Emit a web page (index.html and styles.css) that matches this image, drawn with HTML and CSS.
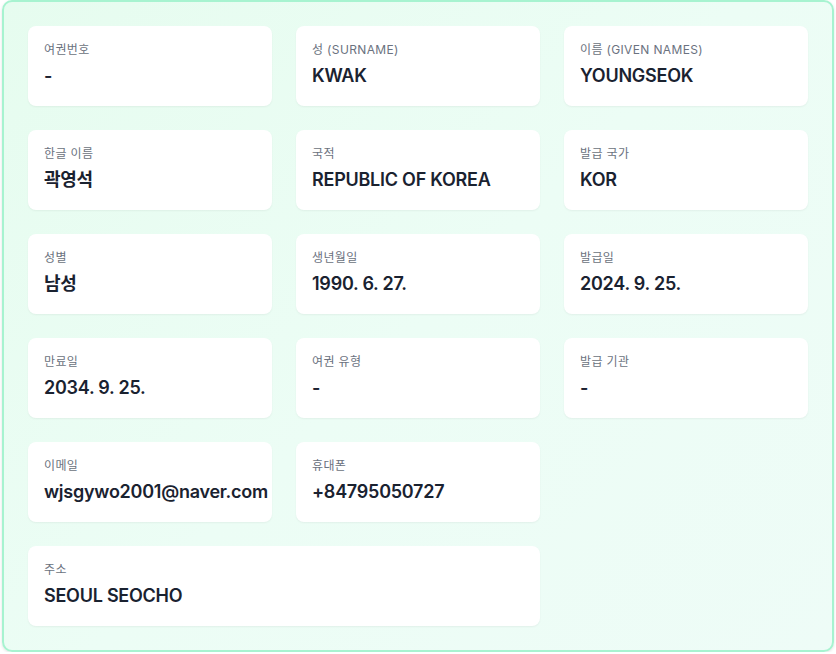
FILE: index.html
```html
<!DOCTYPE html>
<html lang="ko">
<head>
<meta charset="utf-8">
<link rel="stylesheet" href="styles.css">
</head>
<body>
<div class="panel">
  <div class="grid">
    <div class="card"><div class="label">여권번호</div><div class="value">-</div></div>
    <div class="card"><div class="label">성 (SURNAME)</div><div class="value">KWAK</div></div>
    <div class="card"><div class="label">이름 (GIVEN NAMES)</div><div class="value">YOUNGSEOK</div></div>
    <div class="card"><div class="label">한글 이름</div><div class="value">곽영석</div></div>
    <div class="card"><div class="label">국적</div><div class="value">REPUBLIC OF KOREA</div></div>
    <div class="card"><div class="label">발급 국가</div><div class="value">KOR</div></div>
    <div class="card"><div class="label">성별</div><div class="value">남성</div></div>
    <div class="card"><div class="label">생년월일</div><div class="value">1990. 6. 27.</div></div>
    <div class="card"><div class="label">발급일</div><div class="value">2024. 9. 25.</div></div>
    <div class="card"><div class="label">만료일</div><div class="value">2034. 9. 25.</div></div>
    <div class="card"><div class="label">여권 유형</div><div class="value">-</div></div>
    <div class="card"><div class="label">발급 기관</div><div class="value">-</div></div>
    <div class="card"><div class="label">이메일</div><div class="value">wjsgywo2001@naver.com</div></div>
    <div class="card"><div class="label">휴대폰</div><div class="value">+84795050727</div></div>
    <div class="card span2"><div class="label">주소</div><div class="value">SEOUL SEOCHO</div></div>
  </div>
</div>
</body>
</html>
```
FILE: styles.css
```css
html, body {
  margin: 0;
  padding: 0;
  background: #ffffff;
}
body {
  font-family: "Inter", "Noto Sans CJK KR", sans-serif;
  padding: 0 2px;
}
.panel {
  box-sizing: border-box;
  width: 832px;
  height: 652px;
  border: 2px solid #a7f3d0;
  border-radius: 10px;
  background: linear-gradient(135deg, #e6fcef 0%, #ecfdf5 50%, #eefcf7 100%);
  padding: 24px;
  box-shadow: 0 1px 3px rgba(0,0,0,0.12);
}
.grid {
  display: grid;
  grid-template-columns: repeat(3, 244px);
  gap: 24px;
}
.card {
  background: #ffffff;
  border-radius: 8px;
  padding: 16px;
  height: 80px;
  box-sizing: border-box;
  box-shadow: 0 1px 2px rgba(0,0,0,0.05);
  white-space: nowrap;
}
.span2 { grid-column: span 2; }
.label {
  font-size: 12px;
  line-height: 16px;
  color: #6b7280;
  letter-spacing: 0.35px;
}
.value {
  margin-top: 4px;
  font-size: 18px;
  line-height: 28px;
  font-weight: 600;
  color: #1a2230;
  letter-spacing: -0.25px;
}
```
